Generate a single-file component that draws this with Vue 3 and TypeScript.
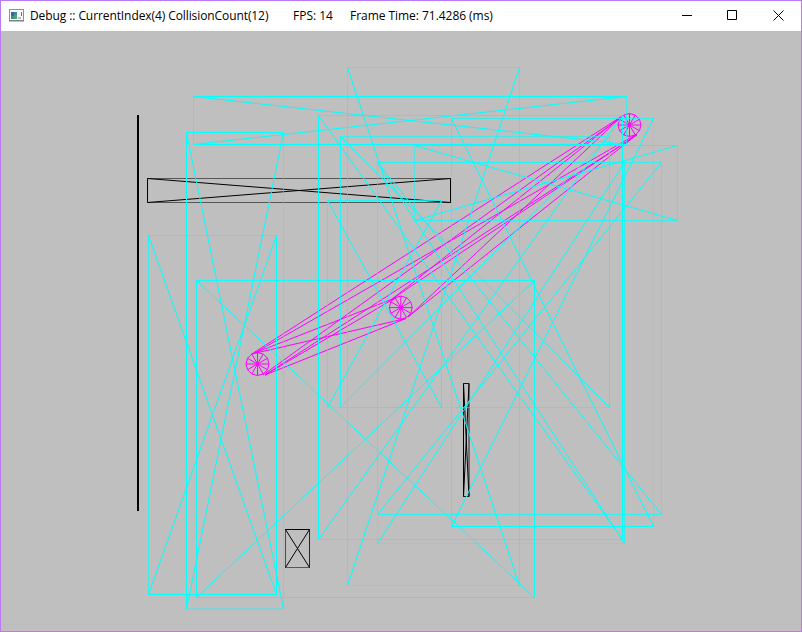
<script setup lang="ts">
interface Box {
  x1: number
  y1: number
  x2: number
  y2: number
  // edge opacity: top, right, bottom, left
  edges: [number, number, number, number]
}

interface Point {
  x: number
  y: number
}

const bounds: Box[] = [
  { x1: 193.5, y1: 96.5, x2: 626.5, y2: 144.5, edges: [1, 0.65, 1, 0.65] },
  { x1: 186.5, y1: 132.5, x2: 283.5, y2: 609.0, edges: [1, 0.55, 0.6, 1] },
  { x1: 148.5, y1: 235.5, x2: 276.5, y2: 594.5, edges: [0.75, 1, 1, 0.7] },
  { x1: 196.5, y1: 280.5, x2: 534.5, y2: 597.5, edges: [0.9, 0.9, 0.75, 0.9] },
  { x1: 318.5, y1: 115.5, x2: 622.5, y2: 539.5, edges: [0.65, 1, 0.7, 1] },
  { x1: 347.5, y1: 67.5, x2: 519.5, y2: 585.5, edges: [0.65, 0.6, 0.5, 0.65] },
  { x1: 340.5, y1: 136.5, x2: 609.5, y2: 407.5, edges: [0.65, 0.75, 0.55, 0.8] },
  { x1: 327.5, y1: 200.5, x2: 441.5, y2: 407.5, edges: [0.8, 0.7, 0.4, 0.5] },
  { x1: 377.5, y1: 162.5, x2: 661.5, y2: 514.5, edges: [0.7, 0.65, 0.75, 0.45] },
  { x1: 451.5, y1: 118.5, x2: 653.5, y2: 526.5, edges: [0.7, 0.45, 1, 0.6] },
  { x1: 414.5, y1: 145.5, x2: 677.5, y2: 220.5, edges: [0.9, 0.65, 0.7, 0.55] },
  { x1: 377.5, y1: 162.5, x2: 624.5, y2: 543.5, edges: [0.4, 0.7, 0.45, 0.3] },
]

const solids: Box[] = [
  { x1: 147.5, y1: 178.5, x2: 450.5, y2: 202.5, edges: [0.55, 1, 0.55, 1] },
  { x1: 463.5, y1: 383.5, x2: 469.0, y2: 496.5, edges: [0.9, 0.8, 0.9, 1] },
  { x1: 285.5, y1: 529.5, x2: 309.5, y2: 567.5, edges: [1, 0.8, 0.55, 0.6] },
]

const circles: Point[] = [
  { x: 629.5, y: 125 },
  { x: 400.8, y: 307.6 },
  { x: 257.5, y: 364 },
]
const radius = 11.5
const spokes = Array.from({ length: 12 }, (_, i) => (i * Math.PI) / 6)

const ring = (c: Point): string =>
  spokes.map((a) => `${c.x + radius * Math.sin(a)},${c.y + radius * Math.cos(a)}`).join(' ')

const links: [number, number, number, number][] = [
  [251, 354.5, 623, 115.5],
  [253, 354, 637, 134],
  [263, 375, 619.5, 118.5],
  [265, 375, 637, 135],
  [391, 300, 622, 116],
  [392, 299, 635, 136],
  [408, 317, 619.5, 118.5],
  [408, 317, 637, 134.5],
  [252, 354, 395, 298],
  [256, 353, 406, 318.5],
  [265, 375, 395, 298],
  [265, 375, 406, 318.5],
]
</script>

<template>
  <main class="window">
    <header class="titlebar">
      <svg class="app-icon" width="16" height="14" viewBox="0 0 16 14">
        <rect x="0.5" y="0.5" width="14" height="11" fill="#f8fafa" stroke="#8c9297" />
        <path d="M0 12h15" stroke="#777d82" stroke-width="1" />
        <rect x="2" y="3" width="6" height="7" fill="#438b91" />
        <path d="M2 3h3v4H2z" fill="#3269a0" />
        <path d="M5 6h3v4H5z" fill="#4ca66b" />
        <rect x="9" y="8" width="3" height="2" fill="#b6bbc0" />
        <path d="M12.5 3v4" stroke="#3b7bb4" />
      </svg>
      <div class="caption">
        <span class="name">Debug :: CurrentIndex(4) CollisionCount(12)</span>
        <span class="fps">FPS: 14</span>
        <span class="time">Frame Time: 71.4286 (ms)</span>
      </div>
      <nav class="controls">
        <svg width="46" height="30" viewBox="0 0 46 30"><path d="M18 14.5h10" /></svg>
        <svg width="46" height="30" viewBox="0 0 46 30"><path d="M17.5 9.5h9v9h-9z" /></svg>
        <svg width="46" height="30" viewBox="0 0 46 30"><path d="M17.5 9.5l10 10M27.5 9.5l-10 10" /></svg>
      </nav>
    </header>
    <svg class="scene" viewBox="1 31 800 600">
      <g class="solid">
        <path d="M138 115v396" stroke-width="2" />
        <g v-for="(b, i) in solids" :key="i">
          <line :x1="b.x1" :y1="b.y1" :x2="b.x2" :y2="b.y1" :stroke-opacity="b.edges[0]" />
          <line :x1="b.x2" :y1="b.y1" :x2="b.x2" :y2="b.y2" :stroke-opacity="b.edges[1]" />
          <line :x1="b.x1" :y1="b.y2" :x2="b.x2" :y2="b.y2" :stroke-opacity="b.edges[2]" />
          <line :x1="b.x1" :y1="b.y1" :x2="b.x1" :y2="b.y2" :stroke-opacity="b.edges[3]" />
          <path :d="`M${b.x1} ${b.y1}L${b.x2} ${b.y2}M${b.x2} ${b.y1}L${b.x1} ${b.y2}`" />
        </g>
      </g>
      <g class="agent">
        <line v-for="(l, i) in links" :key="i" :x1="l[0]" :y1="l[1]" :x2="l[2]" :y2="l[3]" />
        <g v-for="(c, i) in circles" :key="`c${i}`">
          <polygon :points="ring(c)" />
          <line
            v-for="(a, j) in spokes"
            :key="j"
            :x1="c.x"
            :y1="c.y"
            :x2="c.x + radius * Math.sin(a)"
            :y2="c.y + radius * Math.cos(a)"
          />
        </g>
      </g>
      <g class="bounds">
        <g v-for="(b, i) in bounds" :key="i">
          <line :x1="b.x1" :y1="b.y1" :x2="b.x2" :y2="b.y1" :stroke-opacity="b.edges[0]" />
          <line :x1="b.x2" :y1="b.y1" :x2="b.x2" :y2="b.y2" :stroke-opacity="b.edges[1]" />
          <line :x1="b.x1" :y1="b.y2" :x2="b.x2" :y2="b.y2" :stroke-opacity="b.edges[2]" />
          <line :x1="b.x1" :y1="b.y1" :x2="b.x1" :y2="b.y2" :stroke-opacity="b.edges[3]" />
          <path :d="`M${b.x1} ${b.y1}L${b.x2} ${b.y2}M${b.x2} ${b.y1}L${b.x1} ${b.y2}`" />
        </g>
      </g>
    </svg>
  </main>
</template>

<style>
body {
  margin: 0;
  overflow: hidden;
}
</style>

<style scoped>
.window {
  box-sizing: border-box;
  width: 802px;
  height: 632px;
  border: 1px solid #bd79f5;
  background: #bfbfbf;
  display: flex;
  flex-direction: column;
}
.titlebar {
  height: 30px;
  flex: none;
  background: #fff;
  display: flex;
  align-items: center;
  padding-left: 8px;
}
.app-icon {
  flex: none;
  margin-right: 5px;
}
.caption {
  display: flex;
  flex: 1;
  color: #000;
  font: 12px/30px 'Open Sans', 'Noto Sans', sans-serif;
  white-space: pre;
}
.name {
  width: 263px;
  letter-spacing: -0.09px;
}
.fps {
  width: 57px;
}
.time {
  letter-spacing: -0.04px;
}
.controls {
  display: flex;
  margin-right: -1px;
}
.controls svg {
  fill: none;
  stroke: #000;
  stroke-width: 1;
}
.scene {
  display: block;
  width: 800px;
  height: 600px;
  fill: none;
}
.solid {
  stroke: #000;
}
.agent {
  stroke: #f0f;
}
.bounds {
  stroke: #0ff;
}
</style>
